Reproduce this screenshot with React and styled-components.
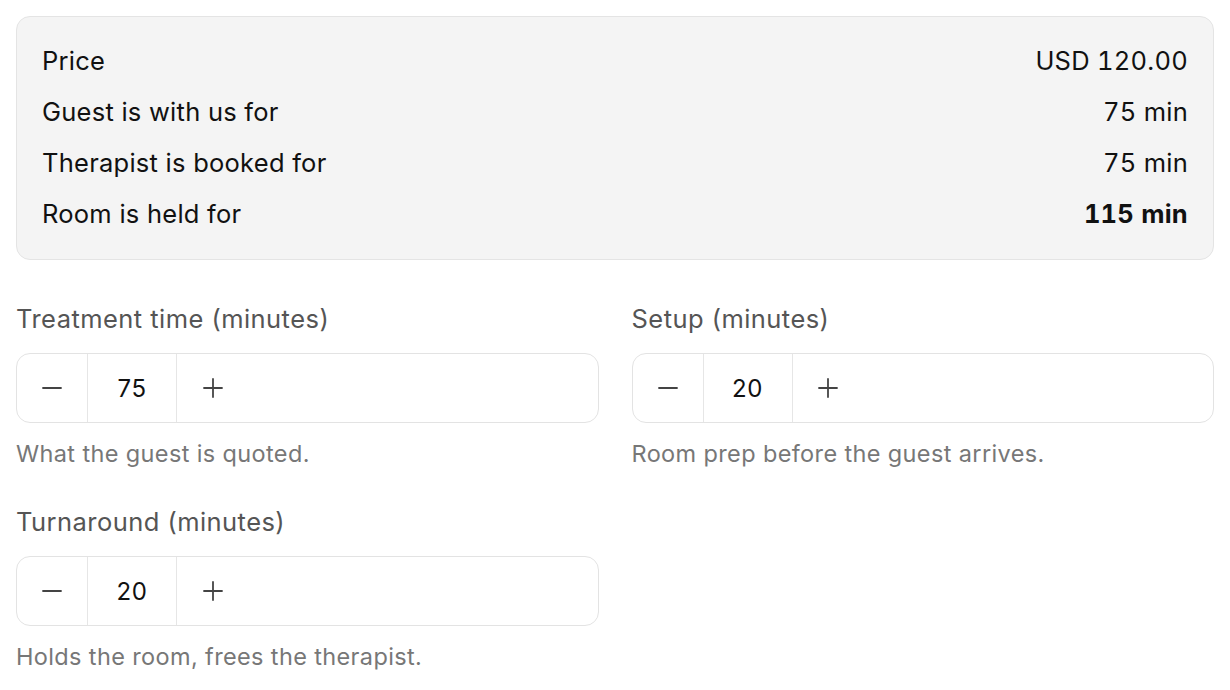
import React, { useState } from 'react'
import styled, { createGlobalStyle } from 'styled-components'

const GlobalStyle = createGlobalStyle`
  * { box-sizing: border-box; }
  body {
    margin: 0;
    background: #ffffff;
    font-family: Inter, "Noto Sans", sans-serif;
    color: #111111;
  }
`

const Page = styled.div`
  padding: 16px;
  display: flex;
  flex-direction: column;
  gap: 44px;
`

const Summary = styled.div`
  background: #f4f4f4;
  border: 1px solid #e4e4e4;
  border-radius: 14px;
  padding: 18px 25px 20px 25px;
  display: flex;
  flex-direction: column;
`

const SummaryRow = styled.div`
  display: flex;
  justify-content: space-between;
  align-items: center;
  height: 51px;
  font-size: 25.5px;
  letter-spacing: 0.25px;
  color: #111111;
`

const Value = styled.span`
  font-weight: ${p => (p.$bold ? 700 : 400)};
  font-variant-numeric: tabular-nums;
`

const Fields = styled.div`
  display: grid;
  grid-template-columns: 1fr 1fr;
  column-gap: 33px;
  row-gap: 38px;
`

const Field = styled.div`
  display: flex;
  flex-direction: column;
`

const Label = styled.div`
  font-size: 25.5px;
  line-height: 30px;
  letter-spacing: 0.45px;
  color: #555555;
  margin-bottom: 19px;
`

const Stepper = styled.div`
  display: flex;
  height: 70px;
  border: 1px solid #e3e3e3;
  border-radius: 14px;
  background: #ffffff;
  overflow: hidden;
`

const StepButton = styled.button`
  width: 71px;
  border: none;
  background: transparent;
  display: flex;
  align-items: center;
  justify-content: center;
  color: #444444;
  cursor: pointer;
  padding: 0;
  border-right: ${p => (p.$divider ? '1px solid #e6e6e6' : 'none')};
`

const StepValue = styled.div`
  width: 89px;
  display: flex;
  align-items: center;
  justify-content: center;
  font-size: 24px;
  letter-spacing: 0.5px;
  color: #111111;
  border-right: 1px solid #e6e6e6;
`

const Help = styled.div`
  font-size: 23.5px;
  line-height: 30px;
  letter-spacing: 0.37px;
  color: #777777;
  margin-top: 16px;
`

const Minus = () => (
  <svg width="24" height="24" viewBox="0 0 24 24" fill="none" stroke="currentColor" strokeWidth="1.8" strokeLinecap="round">
    <path d="M3 12h18" />
  </svg>
)

const Plus = () => (
  <svg width="24" height="24" viewBox="0 0 24 24" fill="none" stroke="currentColor" strokeWidth="1.8" strokeLinecap="round">
    <path d="M3 12h18M12 3v18" />
  </svg>
)

const NumberField = ({ label, help, value, onChange }) => (
  <Field>
    <Label>{label}</Label>
    <Stepper>
      <StepButton $divider onClick={() => onChange(Math.max(0, value - 5))}>
        <Minus />
      </StepButton>
      <StepValue>{value}</StepValue>
      <StepButton onClick={() => onChange(value + 5)}>
        <Plus />
      </StepButton>
    </Stepper>
    <Help>{help}</Help>
  </Field>
)

export default function App() {
  const [treatment, setTreatment] = useState(75)
  const [setup, setSetup] = useState(20)
  const [turnaround, setTurnaround] = useState(20)

  return (
    <Page>
      <GlobalStyle />
      <Summary>
        <SummaryRow><span>Price</span><Value>USD 120.00</Value></SummaryRow>
        <SummaryRow><span>Guest is with us for</span><Value>{treatment} min</Value></SummaryRow>
        <SummaryRow><span>Therapist is booked for</span><Value>{treatment} min</Value></SummaryRow>
        <SummaryRow><span>Room is held for</span><Value $bold>{setup + treatment + turnaround} min</Value></SummaryRow>
      </Summary>
      <Fields>
        <NumberField label="Treatment time (minutes)" help="What the guest is quoted." value={treatment} onChange={setTreatment} />
        <NumberField label="Setup (minutes)" help="Room prep before the guest arrives." value={setup} onChange={setSetup} />
        <NumberField label="Turnaround (minutes)" help="Holds the room, frees the therapist." value={turnaround} onChange={setTurnaround} />
      </Fields>
    </Page>
  )
}
